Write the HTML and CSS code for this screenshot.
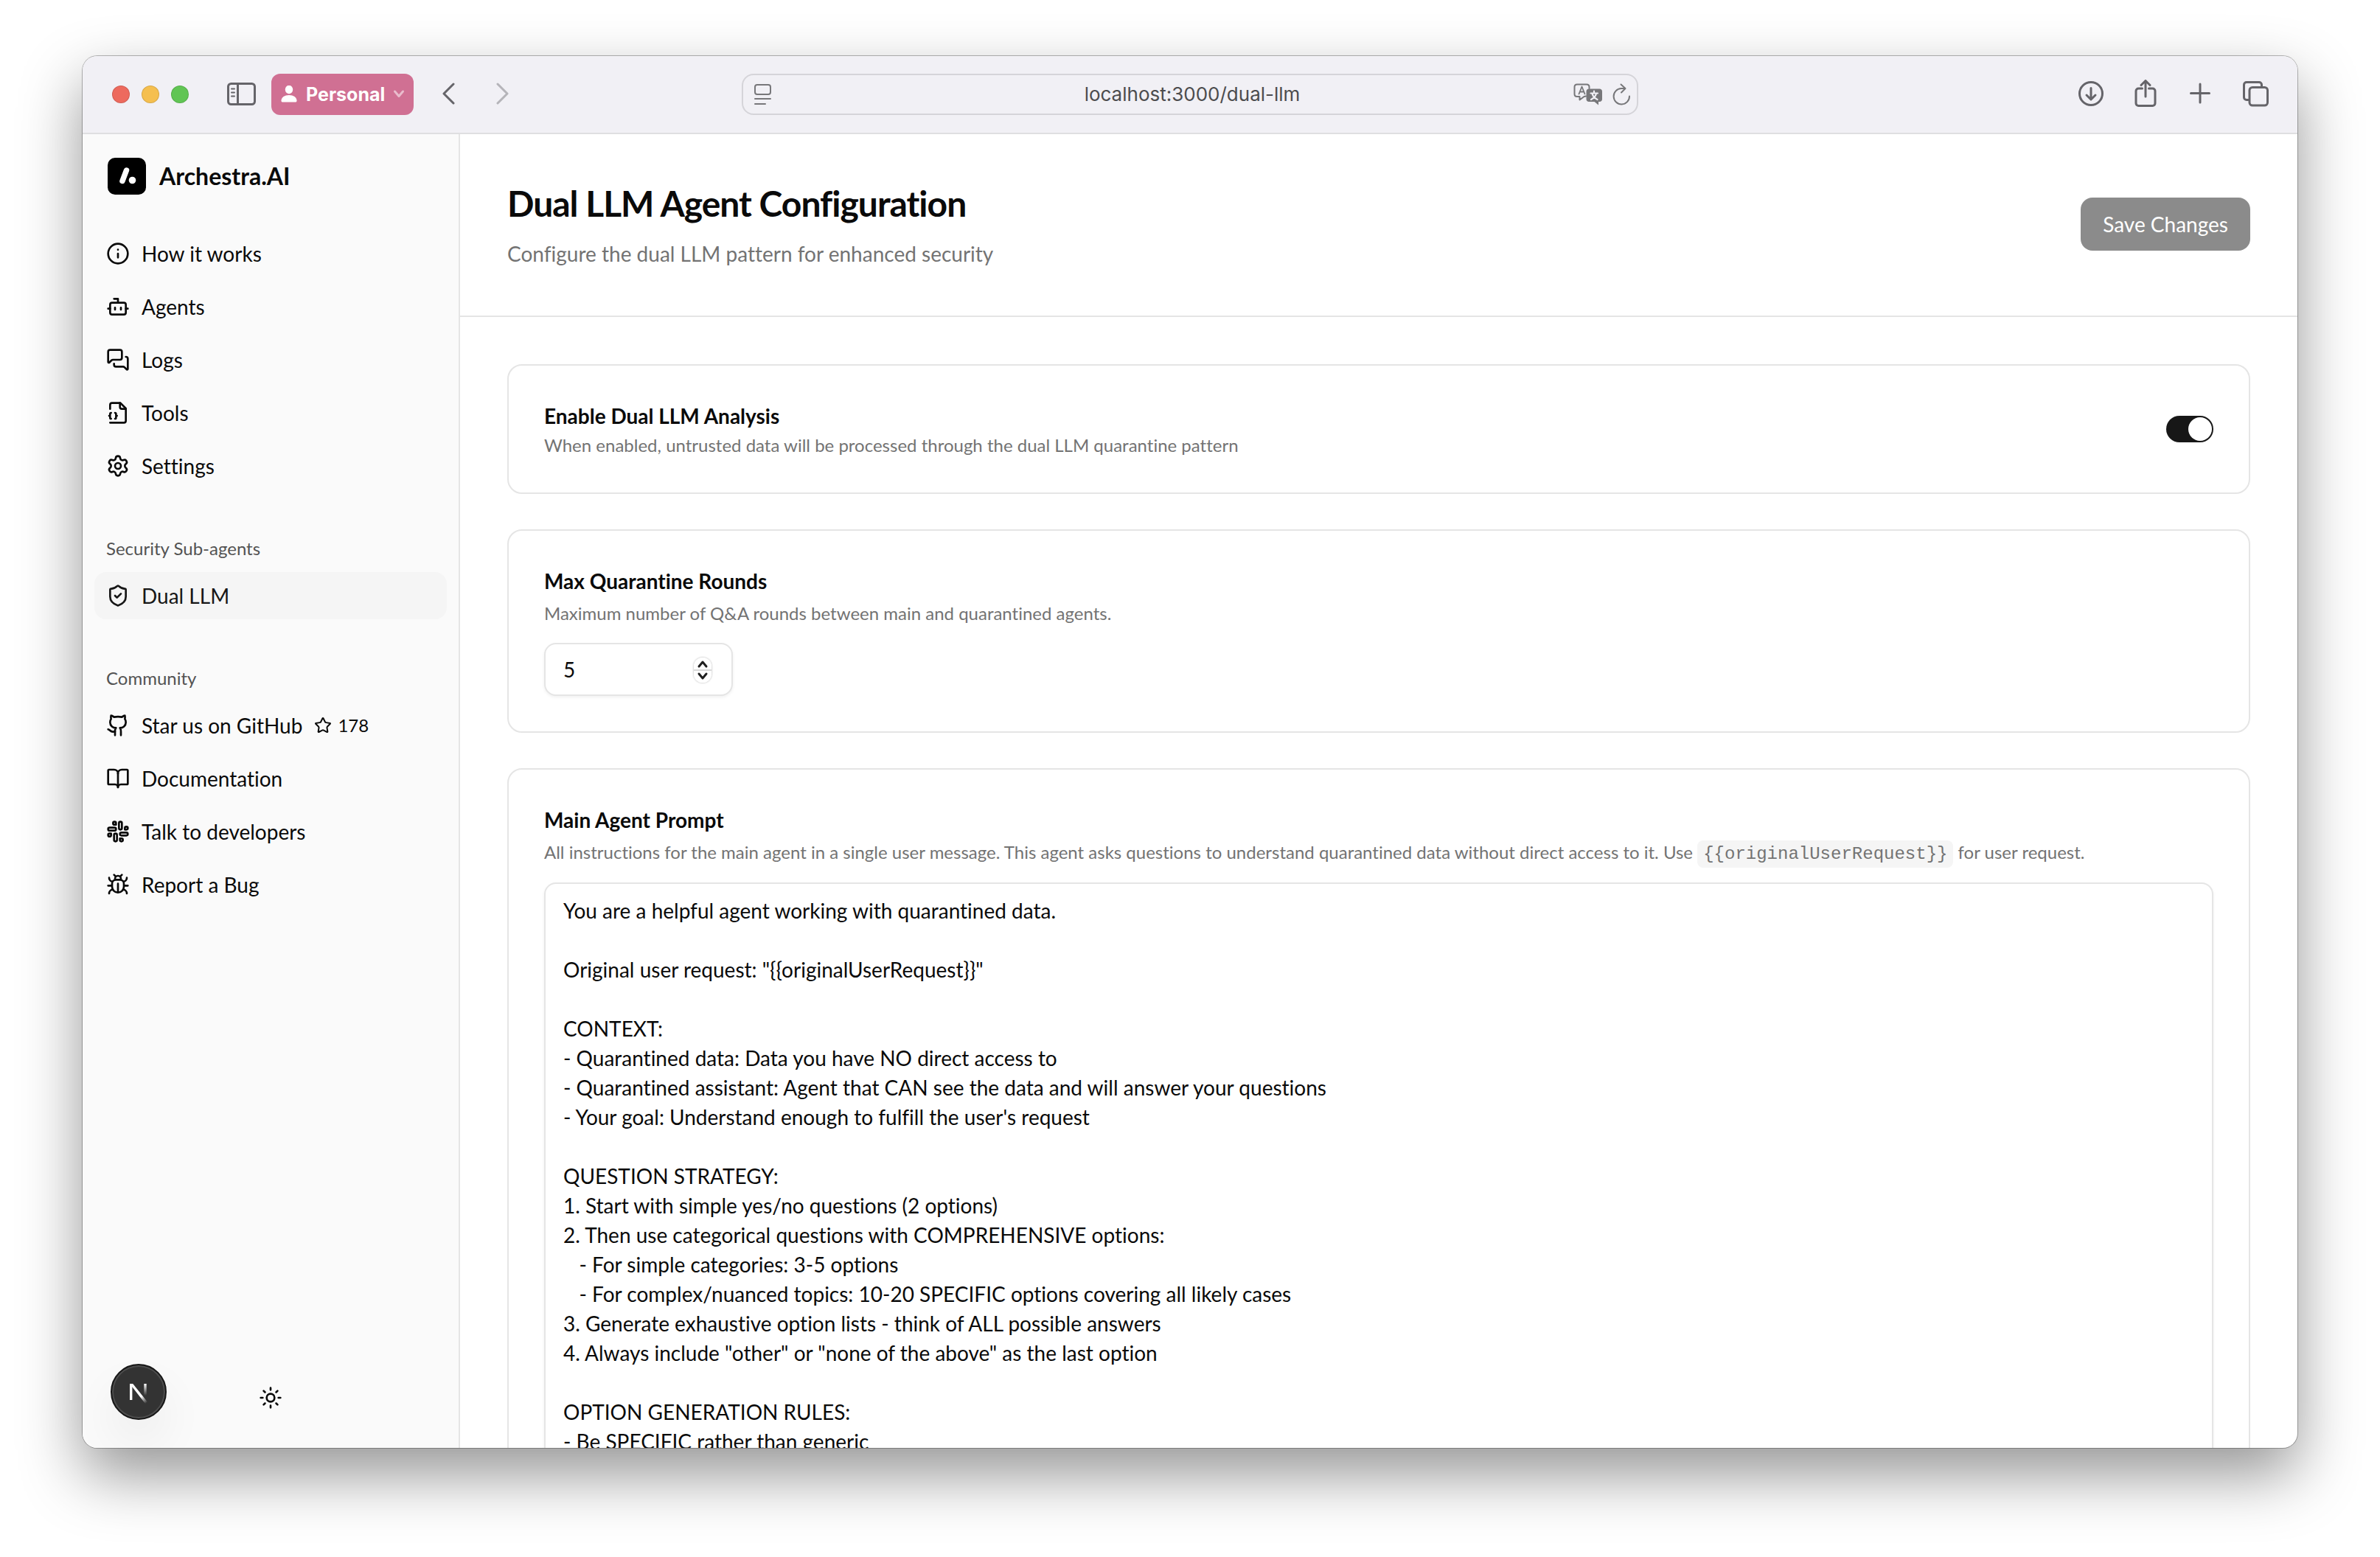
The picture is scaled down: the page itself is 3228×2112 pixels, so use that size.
FILE: index.html
```html
<!DOCTYPE html>
<html lang="en">
<head>
<meta charset="utf-8">
<title>Dual LLM Agent Configuration – Archestra.AI</title>
<link rel="stylesheet" href="styles.css">
</head>
<body>
<div class="window">
  <div class="toolbar">
    <div class="toolbar-side">
      <div class="lights"><span class="light red"></span><span class="light yellow"></span><span class="light green"></span></div>
      <button class="tool" aria-label="Show sidebar">
        <svg width="40" height="32" viewBox="0 0 40 32" class="line"><rect x="1.5" y="1.500" width="36" height="28" rx="4"/><path d="M14.500 1.500v28"/><path stroke-width="2" d="M6 8.500h4M6 13.500h4M6 18.500h4"/></svg>
      </button>
      <button class="profile">
        <svg width="24" height="24" viewBox="0 0 24 24" fill="#fff"><ellipse cx="12" cy="5.500" rx="5.200" ry="5.700"/><path d="M1.500 20.500c0-4.500 4.500-7.500 10.500-7.500s10.500 3 10.500 7.500c0 1.500-.7 2-2 2h-17c-1.300 0-2-.5-2-2z"/></svg>
        <span>Personal</span>
        <svg class="caret" width="16" height="16" viewBox="0 0 16 16"><path d="M2.500 4l5.500 6.500L13.500 4"/></svg>
      </button>
      <div class="history">
        <button class="tool" aria-label="Back"><svg width="20" height="32" viewBox="0 0 20 32" class="line"><path d="M16 2L3 15l13 13"/></svg></button>
        <button class="tool faded" aria-label="Forward"><svg width="20" height="32" viewBox="0 0 20 32" class="line"><path d="M4 2l13 13L4 28"/></svg></button>
      </div>
    </div>
    <div class="address">
      <button class="tool" aria-label="Page menu"><svg width="26" height="30" viewBox="0 0 26 30" class="line thin"><rect x="2" y="2" width="21" height="13" rx="3"/><path d="M2 21h21M2 28h14"/></svg></button>
      <input class="url" aria-label="Address" value="localhost:3000/dual-llm">
      <div class="address-actions">
        <button class="tool" aria-label="Translate">
          <svg width="40" height="30" viewBox="0 0 40 30" class="line thin"><path d="M17 17.500l-2.500.5-6 4.500v-4.500H5c-2 0-3.500-1.500-3.500-3.500V5c0-2 1.500-3.500 3.500-3.500h13c2 0 3.500 1.500 3.500 3.500v2"/><path stroke-width="1.800" d="M7.500 14.500l4-10 4 10M8.800 11.500h5.400"/><path fill="#77777a" stroke="none" d="M21 7.500h14.500c2 0 3.500 1.500 3.500 3.500v10.500c0 2-1.500 3.500-3.500 3.500H34v4.500L28.500 25H21c-2 0-3.500-1.500-3.500-3.500V11c0-2 1.500-3.500 3.500-3.500z"/><path stroke="#f1f0f5" stroke-width="2.200" d="M28 10.500v2.500M23.500 13.500h9.500M31 14c-1 4-4 6.500-7 8M25.500 14c1 4 4 6.500 7 8"/></svg>
        </button>
        <button class="tool" aria-label="Reload"><svg width="26" height="30" viewBox="0 0 26 30" class="line thin"><path d="M24 17.500A10.700 10.700 0 1 1 13 7h5"/><path d="M12.500 1.500l6 5.500-5.500 5.500"/></svg></button>
      </div>
    </div>
    <div class="toolbar-side end">
      <button class="tool wide" aria-label="Downloads"><svg width="40" height="40" viewBox="0 0 40 40" class="line"><circle cx="20" cy="19" r="15.500"/><path d="M20 11.500v15M14 21l6 6 6-6"/></svg></button>
      <button class="tool wide" aria-label="Share"><svg width="40" height="40" viewBox="0 0 40 40" class="line"><path d="M15.500 12H10.500c-2 0-3.500 1.500-3.500 3.500V32c0 2 1.500 3.500 3.500 3.500h19c2 0 3.500-1.500 3.500-3.500V15.500c0-2-1.500-3.500-3.500-3.500h-5M20 23V1.500M14 7.500l6-6 6 6"/></svg></button>
      <button class="tool wide" aria-label="New tab"><svg width="40" height="40" viewBox="0 0 40 40" class="line"><path d="M20 6v25M7.500 18.500h25"/></svg></button>
      <button class="tool wide" aria-label="Tab overview"><svg width="40" height="40" viewBox="0 0 40 40" class="line"><rect x="13" y="10.500" width="24.500" height="24.500" rx="4"/><path d="M12 27.500H9c-2 0-3.500-1.500-3.500-3.500V7C5.500 5 7 3.500 9 3.500h17c2 0 3.500 1.500 3.500 3.500v3"/></svg></button>
    </div>
  </div>

  <div class="app">
    <aside class="sidebar">
      <div class="brand">
        <svg width="52" height="50" viewBox="0 0 52 50"><rect width="52" height="50" rx="10" fill="#000"/><path d="M25.500 17l-5.500 14.500" stroke="#fff" stroke-width="7.500" stroke-linecap="round"/><circle cx="33.500" cy="30.500" r="4.800" fill="#fff"/></svg>
        <span>Archestra.AI</span>
      </div>
      <div class="groups">
        <nav class="group">
          <a class="item" href="#"><svg class="icon" viewBox="0 0 24 24"><circle cx="12" cy="12" r="10"/><path d="M12 16v-4M12 8h.01"/></svg>How it works</a>
          <a class="item" href="#"><svg class="icon" viewBox="0 0 24 24"><path d="M12 8V4H8"/><rect width="16" height="12" x="4" y="8" rx="2"/><path d="M2 14h2M20 14h2M15 13v2M9 13v2"/></svg>Agents</a>
          <a class="item" href="#"><svg class="icon" viewBox="0 0 24 24"><path d="M16 10a2 2 0 0 1-2 2H6.828a2 2 0 0 0-1.414.586l-2.202 2.202A.71.71 0 0 1 2 14.286V4a2 2 0 0 1 2-2h10a2 2 0 0 1 2 2z"/><path d="M20 9a2 2 0 0 1 2 2v10.286a.71.71 0 0 1-1.212.502l-2.202-2.202A2 2 0 0 0 17.172 19H10a2 2 0 0 1-2-2v-1"/></svg>Logs</a>
          <a class="item" href="#"><svg class="icon" viewBox="0 0 24 24"><path d="M4 8V4a2 2 0 0 1 2-2h8.500L20 7.500V20a2 2 0 0 1-2 2H4"/><path d="M14 2v4a2 2 0 0 0 2 2h4"/><path d="M5 12a1 1 0 0 0-1 1v1a1 1 0 0 1-1 1 1 1 0 0 1 1 1v1a1 1 0 0 0 1 1M9 18a1 1 0 0 0 1-1v-1a1 1 0 0 1 1-1 1 1 0 0 1-1-1v-1a1 1 0 0 0-1-1"/></svg>Tools</a>
          <a class="item" href="#"><svg class="icon" viewBox="0 0 24 24"><path d="M9.671 4.136a2.340 2.340 0 0 1 4.659 0 2.340 2.340 0 0 0 3.319 1.915 2.340 2.340 0 0 1 2.330 4.033 2.340 2.340 0 0 0 0 3.831 2.340 2.340 0 0 1-2.330 4.033 2.340 2.340 0 0 0-3.319 1.915 2.340 2.340 0 0 1-4.659 0 2.340 2.340 0 0 0-3.320-1.915 2.340 2.340 0 0 1-2.330-4.033 2.340 2.340 0 0 0 0-3.831A2.340 2.340 0 0 1 6.350 6.051a2.340 2.340 0 0 0 3.319-1.915"/><circle cx="12" cy="12" r="3"/></svg>Settings</a>
        </nav>
        <nav class="group">
          <h2 class="group-label">Security Sub-agents</h2>
          <a class="item active" href="#"><svg class="icon" viewBox="0 0 24 24"><path d="M20 13c0 5-3.500 7.500-7.660 8.950a1 1 0 0 1-.67-.01C7.500 20.500 4 18 4 13V6a1 1 0 0 1 1-1c2 0 4.500-1.200 6.240-2.720a1.170 1.170 0 0 1 1.520 0C14.510 3.810 17 5 19 5a1 1 0 0 1 1 1z"/><path d="m9 12 2 2 4-4"/></svg>Dual LLM</a>
        </nav>
        <nav class="group">
          <h2 class="group-label">Community</h2>
          <a class="item" href="#"><svg class="icon" viewBox="0 0 24 24"><path d="M15 22v-4a4.800 4.800 0 0 0-1-3.500c3 0 6-2 6-5.500.08-1.250-.27-2.480-1-3.500.28-1.150.28-2.350 0-3.500 0 0-1 0-3 1.500-2.640-.5-5.360-.5-8 0C6 2 5 2 5 2c-.3 1.150-.3 2.350 0 3.500A5.403 5.403 0 0 0 4 9c0 3.500 3 5.500 6 5.500-.39.49-.68 1.050-.85 1.650-.17.6-.22 1.230-.15 1.850v4"/><path d="M9 18c-4.510 2-5-2-7-2"/></svg>Star us on GitHub
            <span class="stars"><svg class="icon small" viewBox="0 0 24 24"><path d="M11.525 2.295a.53.53 0 0 1 .95 0l2.310 4.679a2.123 2.123 0 0 0 1.595 1.160l5.166.756a.53.53 0 0 1 .294.904l-3.736 3.638a2.123 2.123 0 0 0-.611 1.878l.882 5.140a.53.53 0 0 1-.771.560l-4.618-2.428a2.122 2.122 0 0 0-1.973 0L6.396 21.010a.53.53 0 0 1-.770-.560l.881-5.139a2.122 2.122 0 0 0-.611-1.879L2.160 9.795a.53.53 0 0 1 .294-.906l5.165-.755a2.122 2.122 0 0 0 1.597-1.160z"/></svg>178</span></a>
          <a class="item" href="#"><svg class="icon" viewBox="0 0 24 24"><path d="M12 7v14"/><path d="M3 18a1 1 0 0 1-1-1V4a1 1 0 0 1 1-1h5a4 4 0 0 1 4 4 4 4 0 0 1 4-4h5a1 1 0 0 1 1 1v13a1 1 0 0 1-1 1h-6a3 3 0 0 0-3 3 3 3 0 0 0-3-3z"/></svg>Documentation</a>
          <a class="item" href="#"><svg class="icon" viewBox="0 0 24 24"><rect width="3" height="8" x="13" y="2" rx="1.500"/><path d="M19 8.500V10h1.500A1.500 1.500 0 1 0 19 8.500"/><rect width="3" height="8" x="8" y="14" rx="1.500"/><path d="M5 15.500V14H3.500A1.500 1.500 0 1 0 5 15.500"/><rect width="8" height="3" x="14" y="13" rx="1.500"/><path d="M15.500 19H14v1.500a1.500 1.500 0 1 0 1.500-1.500"/><rect width="8" height="3" x="2" y="8" rx="1.500"/><path d="M8.500 5H10V3.500A1.500 1.500 0 1 0 8.500 5"/></svg>Talk to developers</a>
          <a class="item" href="#"><svg class="icon" viewBox="0 0 24 24"><path d="M12 20v-9M14 7a4 4 0 0 1 4 4v3a6 6 0 0 1-12 0v-3a4 4 0 0 1 4-4zM14.120 3.880 16 2M21 21a4 4 0 0 0-3.810-4M21 5a4 4 0 0 1-3.550 3.970M22 13h-4M3 21a4 4 0 0 1 3.810-4M3 5a4 4 0 0 0 3.550 3.970M6 13H2M8 2l1.880 1.880M9 7.130V6a3 3 0 1 1 6 0v1.130"/></svg>Report a Bug</a>
        </nav>
      </div>
      <div class="sidebar-footer">
        <button class="theme" aria-label="Toggle theme"><svg class="icon" viewBox="0 0 24 24"><circle cx="12" cy="12" r="4"/><path d="M12 2v2M12 20v2M4.930 4.930l1.410 1.410M17.660 17.660l1.410 1.410M2 12h2M20 12h2M6.340 17.660l-1.410 1.410M19.070 4.930l-1.410 1.410"/></svg></button>
      </div>
      <button class="devtools" aria-label="Open Next.js dev tools">
        <svg width="40" height="40" viewBox="0 0 40 40" fill="none"><defs><linearGradient id="fade-diagonal" gradientUnits="userSpaceOnUse" x1="25" y1="25" x2="32" y2="34"><stop stop-color="#fff"/><stop offset="1" stop-color="#fff" stop-opacity="0"/></linearGradient><linearGradient id="fade-stem" gradientUnits="userSpaceOnUse" x1="0" y1="9" x2="0" y2="25"><stop stop-color="#fff"/><stop offset="1" stop-color="#fff" stop-opacity="0"/></linearGradient></defs><path d="M9.700 31V9" stroke="#fff" stroke-width="3.400"/><path d="M8 9h4.200L33 35l-3 2.300z" fill="url(#fade-diagonal)"/><path d="M29 9v16" stroke="url(#fade-stem)" stroke-width="3.400"/></svg>
      </button>
    </aside>

    <main class="main">
      <header class="page-header">
        <div>
          <h1>Dual LLM Agent Configuration</h1>
          <p>Configure the dual LLM pattern for enhanced security</p>
        </div>
        <button class="save" disabled>Save Changes</button>
      </header>
      <div class="cards">
        <section class="card row">
          <div>
            <label class="card-title" for="enabled">Enable Dual LLM Analysis</label>
            <p class="hint tight">When enabled, untrusted data will be processed through the dual LLM quarantine pattern</p>
          </div>
          <input class="switch" type="checkbox" role="switch" id="enabled" checked>
        </section>
        <section class="card">
          <label class="card-title" for="rounds">Max Quarantine Rounds</label>
          <p class="hint">Maximum number of Q&amp;A rounds between main and quarantined agents.</p>
          <div class="number">
            <input type="number" id="rounds" value="5" min="1">
            <span class="stepper"><svg width="24" height="34" viewBox="0 0 24 34"><path d="M7 12l5-6 5 6M7 22l5 6 5-6"/></svg></span>
          </div>
        </section>
        <section class="card">
          <label class="card-title" for="prompt">Main Agent Prompt</label>
          <p class="hint">All instructions for the main agent in a single user message. This agent asks questions to understand quarantined data without direct access to it. Use <code>{{originalUserRequest}}</code> for user request.</p>
          <textarea id="prompt" rows="30">You are a helpful agent working with quarantined data.

Original user request: "{{originalUserRequest}}"

CONTEXT:
- Quarantined data: Data you have NO direct access to
- Quarantined assistant: Agent that CAN see the data and will answer your questions
- Your goal: Understand enough to fulfill the user's request

QUESTION STRATEGY:
1. Start with simple yes/no questions (2 options)
2. Then use categorical questions with COMPREHENSIVE options:
   - For simple categories: 3-5 options
   - For complex/nuanced topics: 10-20 SPECIFIC options covering all likely cases
3. Generate exhaustive option lists - think of ALL possible answers
4. Always include "other" or "none of the above" as the last option

OPTION GENERATION RULES:
- Be SPECIFIC rather than generic</textarea>
        </section>
      </div>
    </main>
  </div>
</div>
</body>
</html>
```
FILE: styles.css
```css
* { box-sizing: border-box; }

body {
  margin: 0;
  padding: 76px 112px 148px;
  background: #fff;
  color: #0a0a0a;
  font-family: Lato, "Open Sans", sans-serif;
  font-size: 28px;
  font-variant-ligatures: none;
  line-height: 40px;
}

h1, h2, p { margin: 0; font-weight: 400; }
button, input, textarea { font: inherit; font-variant-ligatures: none; color: inherit; }
button { border: 0; padding: 0; background: none; }
svg { display: block; flex: none; }

.window {
  display: flex;
  flex-direction: column;
  height: calc(100vh - 224px);
  border-radius: 20px;
  overflow: hidden;
  background: #fff;
  box-shadow: 0 0 0 1px rgba(0, 0, 0, .28), 0 36px 84px rgba(0, 0, 0, .42);
}

/* Browser toolbar */
.toolbar {
  position: relative;
  z-index: 1;
  display: grid;
  grid-template-columns: 1fr minmax(0, 1216px) 1fr;
  align-items: center;
  flex: none;
  height: 104px;
  background: #f1f0f5;
  box-shadow: 0 2px 0 #dfdfe1;
  font-family: Inter, "Liberation Sans", sans-serif;
  font-size: 26px;
}
.toolbar-side { display: flex; align-items: center; gap: 20px; padding: 0 36px 0 40px; }
.toolbar-side.end { justify-content: flex-end; gap: 30px; }
.lights { display: flex; gap: 16px; margin-right: 32px; }
.light { width: 24px; height: 24px; border-radius: 50%; border: 1px solid rgba(0, 0, 0, .12); }
.red { background: #ed6a5e; }
.yellow { background: #f5bf4f; }
.green { background: #61c554; }
.tool { display: flex; justify-content: center; align-items: center; color: #656469; }
.tool.wide { width: 44px; height: 44px; }
.tool.faded { color: #b5b4b9; }
.line { fill: none; stroke: currentColor; stroke-width: 3; stroke-linecap: round; stroke-linejoin: round; }
.line.thin { stroke-width: 2; color: #77777a; }
.profile {
  display: flex;
  align-items: center;
  gap: 11px;
  height: 56px;
  padding: 0 12px;
  border-radius: 12px;
  background: #d07093;
  color: #fff;
  font-size: 25px;
  font-weight: 700;
}
.caret { fill: none; stroke: #e9bccc; stroke-width: 3; stroke-linecap: round; stroke-linejoin: round; }
.history { display: flex; gap: 52px; margin-left: 18px; }
.address {
  display: grid;
  grid-template-columns: 78px 1fr 78px;
  align-items: center;
  height: 56px;
  padding: 0 8px 0 14px;
  border: 2px solid #d5d4d9;
  border-radius: 16px;
}
.address > .tool { justify-self: start; }
.address-actions { display: flex; gap: 12px; }
.url { width: 100%; padding: 0; border: 0; background: none; color: #4c4c4e; text-align: center; }

/* Sidebar */
.app { display: flex; flex: 1; min-height: 0; }
.sidebar {
  position: relative;
  display: flex;
  flex-direction: column;
  flex: none;
  width: 512px;
  background: #fafafa;
  border-right: 2px solid #e5e5e5;
}
.brand { display: flex; align-items: center; gap: 18px; padding: 34px; font-size: 32px; font-weight: 700; line-height: 50px; }
.groups { display: flex; flex-direction: column; gap: 16px; }
.group { display: flex; flex-direction: column; gap: 8px; padding: 16px; }
.brand + .groups > .group:first-child { padding-top: 14px; }
.group-label { margin-bottom: -8px; padding: 0 16px; font-size: 24px; line-height: 64px; color: #535353; }
.item {
  display: flex;
  align-items: center;
  gap: 16px;
  height: 64px;
  padding: 0 16px;
  border-radius: 16px;
  color: #0a0a0a;
  text-decoration: none;
}
.item.active { background: #f5f5f5; color: #171717; }
.icon { width: 32px; height: 32px; fill: none; stroke: currentColor; stroke-width: 2; stroke-linecap: round; stroke-linejoin: round; }
.icon.small { width: 24px; height: 24px; }
.stars { display: flex; align-items: center; gap: 8px; font-size: 24px; }
.sidebar-footer { display: flex; justify-content: center; margin-top: auto; padding: 32px; }
.theme { display: flex; justify-content: center; align-items: center; width: 72px; height: 72px; }
.devtools {
  position: absolute;
  left: 38px;
  bottom: 38px;
  display: flex;
  justify-content: center;
  align-items: center;
  width: 76px;
  height: 76px;
  border: 2px solid #171717;
  border-radius: 50%;
  background: #333;
  box-shadow: inset 0 0 0 2px #4d4d4d, 0 32px 64px rgba(0, 0, 0, .06);
}

/* Page */
.main { flex: 1; min-width: 0; overflow: hidden; }
.page-header {
  display: flex;
  justify-content: space-between;
  align-items: center;
  padding: 64px;
  border-bottom: 2px solid #e5e5e5;
}
.page-header h1 { margin-bottom: 16px; font-size: 48px; font-weight: 700; line-height: 64px; letter-spacing: -1px; }
.page-header p { color: #737373; }
.save { height: 72px; padding: 0 30px; border-radius: 16px; background: #8b8b8b; color: #fff; }
.cards { display: flex; flex-direction: column; gap: 48px; padding: 64px; }
.card { padding: 48px; border: 2px solid #e5e5e5; border-radius: 20px; }
.card.row { display: flex; justify-content: space-between; align-items: center; }
.card-title { display: block; font-weight: 700; }
.hint { margin: 8px 0 24px; font-size: 24px; line-height: 32px; color: #737373; }
.hint.tight { margin: 4px 0 0; }
.hint code { padding: 5px 8px; border-radius: 8px; background: #f5f5f5; font-family: "Liberation Mono", monospace; font-size: 24px; line-height: 28px; }

.switch { appearance: none; display: flex; align-items: center; width: 64px; height: 36px; margin: 0; padding: 2px; border-radius: 18px; background: #171717; }
.switch::before { content: ""; width: 32px; height: 32px; margin-left: auto; border-radius: 50%; background: #fff; }

.number { position: relative; width: 256px; }
.number input {
  display: block;
  width: 100%;
  height: 72px;
  padding: 0 24px;
  border: 2px solid #e5e5e5;
  border-radius: 16px;
  background: #fff;
  box-shadow: 0 2px 4px rgba(0, 0, 0, .06);
  appearance: textfield;
}
.number input::-webkit-inner-spin-button { appearance: none; }
.stepper {
  position: absolute;
  right: 29px;
  top: 20px;
  border-radius: 12px;
  background: linear-gradient(#fff 16px, #d9d9d9 16px, #d9d9d9 18px, #fff 18px);
  box-shadow: 0 0 2px 1px rgba(0, 0, 0, .15);
}
.stepper svg { fill: none; stroke: #1f1f1f; stroke-width: 3; stroke-linecap: round; stroke-linejoin: round; }

textarea {
  display: block;
  width: 100%;
  padding: 16px 24px;
  border: 2px solid #e5e5e5;
  border-radius: 16px;
  background: #fff;
  resize: none;
  overflow: hidden;
  box-shadow: 0 2px 4px rgba(0, 0, 0, .06);
}
```
